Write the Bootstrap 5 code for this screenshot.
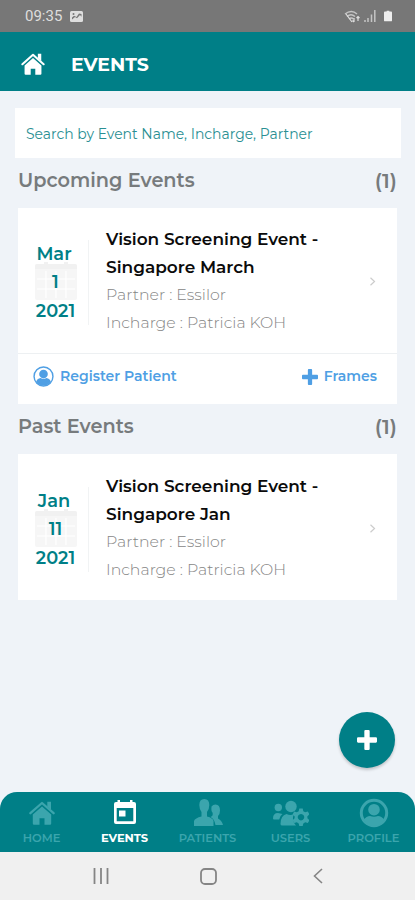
<!DOCTYPE html>
<html lang="en">
<head>
<meta charset="utf-8">
<meta name="viewport" content="width=device-width, initial-scale=1">
<title>Events</title>
<link href="https://cdn.jsdelivr.net/npm/bootstrap@5.3.0/dist/css/bootstrap.min.css" rel="stylesheet">
<style>
:root{--teal:#007f87;--dim:#3ba5ad;--blue:#4f9fe4}
body{font-family:Montserrat,Inter,sans-serif;background:#eff3f8;height:900px;overflow:hidden}
svg{display:block;flex:none}
.status-bar{height:32px;background:#777;color:#dedede;font:15px/32px Roboto,sans-serif;padding:0 23px 0 25px}
.app-header{height:59px;background:var(--teal);color:#fff;padding:4px 21px 0}
.app-header h1{font-size:18.9px;font-weight:700;margin:3px 0 0 26px}
.search-box{height:50px;margin:17px 14px 0 15px;border:0;border-radius:0;background:#fff;padding:1px 11px 0;font-size:13.95px;width:386px}
.search-box::placeholder{color:#2a8f93;opacity:1}
.section-title{height:50px;padding:0 18px 4px 18px;color:#777b7d}
.section-title h2{font-size:19.3px;font-weight:600;margin:0}
.section-title span{font-size:20.5px;font-weight:600}
.event-card{margin:0 18px;border:0;border-radius:0;background:#fff}
.event-main{height:145px;padding:17px 0 15px}
.past .event-main{height:146px;padding:18px 0 14px}
.date-box{width:71px;padding-left:5px;margin-top:15px;height:85px;border-right:1px solid #f1f3f4;color:var(--teal);font-size:17.8px;font-weight:600;line-height:28.3px;text-align:center}
.date-box div{position:relative;left:0}
.date-box div:nth-of-type(1){padding-right:3px}
.date-box .cal{position:absolute;left:17px;top:22px}
.event-info{margin-left:17px;line-height:28.1px;font-size:15.75px;color:#858585;font-weight:300}
.event-info h3{font-size:16.95px;line-height:28.1px;font-weight:600;color:#0b0b0b;margin:0}
.chevron{margin:0 21px 1px auto}
.event-foot{height:51px;border-top:1px solid #edf0f2;padding:0 20px 5px 15px;color:var(--blue);font-size:14px;font-weight:600}
.reg{margin-left:6px}
.fab{position:absolute;left:339px;top:712px;width:56px;height:56px;border-radius:50%;background:var(--teal);border:0;box-shadow:0 2px 3px #0003;padding:0}
.tab-bar{height:60px;background:var(--teal);border-radius:17px 17px 0 0;color:var(--dim);font-size:11.5px;font-weight:600}
.tab-bar a{color:inherit;text-decoration:none;width:83px;padding-top:6px;line-height:17px}
.tab-bar svg{height:30px;margin-bottom:2px}
.tab-bar .current{color:#fff;font-weight:700;letter-spacing:-.1px}
.sys-nav{height:48px;background:#f0f0f0;color:#858585}
</style>
<script src="https://cdn.jsdelivr.net/npm/bootstrap@5.3.0/dist/js/bootstrap.bundle.min.js"></script>
</head>
<body class="d-flex flex-column position-relative">
<svg width="0" height="0" class="position-absolute">
<symbol id="house" viewBox="0 0 26 24"><path fill="currentColor" d="M13 5.500 22.200 13.500v9q0 1.200-1.200 1.200H15.500v-6.500h-5v6.500H5q-1.200 0-1.200-1.200v-9Z"/><path fill="none" stroke="currentColor" stroke-width="2.300" stroke-linecap="round" stroke-linejoin="round" d="M1.400 12.200 13 2l11.600 10.200"/><path fill="currentColor" d="M18.300.800H22v8l-3.700-3Z"/></symbol>
<symbol id="calendar" viewBox="0 0 42 38"><path fill="#f6f6f6" d="M0 4q0-2 2-2h38q2 0 2 2v32q0 2-2 2H2q-2 0-2-2Z"/><path fill="#f1f1f1" d="M0 7V4q0-2 2-2h7V0h4v2h16V0h4v2h7q2 0 2 2v3Z"/><path stroke="#fff" stroke-width="1.200" d="M2 17h38M2 27h38M11 9v27M21 9v27M31 9v27"/></symbol>
<symbol id="person" viewBox="0 0 30 30"><circle cx="15" cy="15" r="13.500" fill="none" stroke="currentColor" stroke-width="2"/><circle cx="15" cy="11.500" r="6.200" fill="currentColor"/><path fill="currentColor" d="M4.500 22.500q1-4.500 6.500-5.500 4 3 8 0 5.500 1 6.500 5.500-4 5.500-10.500 5.500t-10.500-5.500"/></symbol>
<symbol id="profile" viewBox="0 0 30 30"><circle cx="15" cy="15" r="12.700" fill="none" stroke="currentColor" stroke-width="3"/><circle cx="15" cy="11.700" r="5.800" fill="currentColor"/><path fill="currentColor" d="M4.500 22q3-4 6.500-4 4 1.600 8 0 3.500 0 6.500 4-4 6-10.500 6T4.500 22"/></symbol>
<symbol id="plus" viewBox="0 0 18 18"><path fill="currentColor" d="M6.600 1q0-1 1-1h2.800q1 0 1 1v5.600H17q1 0 1 1v2.800q0 1-1 1h-5.600V17q0 1-1 1H7.600q-1 0-1-1v-5.600H1q-1 0-1-1V7.600q0-1 1-1h5.600Z"/></symbol>
<symbol id="next" viewBox="0 0 6 9"><path d="M.5.800 4.500 4.500.5 8.200" fill="none" stroke="#ccc" stroke-width="1.200"/></symbol>
</svg>
<div class="status-bar d-flex align-items-center">
<span>09:35</span>
<svg class="ms-2" width="13" height="11" viewBox="0 0 13 11"><rect width="13" height="11" rx="1.500" fill="#dedede"/><path d="M2 8.500 5 6l2 1.300L10 4l1.500 1.700V3L9 2.500 6.500 6 4 4.800 2 6.500Z" fill="#777"/><circle cx="3.500" cy="3" r="1" fill="#777"/></svg>
<svg class="ms-auto" width="16" height="13" viewBox="0 0 16 13"><path d="M1 4q6.500-5 12 0M3 6.500q4-3.500 8 0M5 9q2.300-2 4.500 0" fill="none" stroke="#c5c5c5" stroke-width="1.500"/><path d="m8 12-6-8m8 4v4m-1.500-1.500L10 12m4-5v4m-1.500-3L14 6.500 15.500 8" fill="none" stroke="#ddd" stroke-width="1.200"/></svg>
<svg class="ms-1" width="12" height="12" viewBox="0 0 12 12"><path d="M1 10v2M4 8v4M7.500 4.500V12M10.800 0v12" stroke="#c5c5c5" stroke-width="1.500"/></svg>
<svg class="ms-2" width="8" height="12" viewBox="0 0 9 12"><path d="M3 0h3v1h2q1 0 1 1v9q0 1-1 1H1q-1 0-1-1V2q0-1 1-1h2Z" fill="#eee"/></svg>
</div>
<header class="app-header d-flex align-items-center"><svg width="24" height="22"><use href="#house"/></svg><h1>EVENTS</h1></header>
<main class="flex-grow-1">
<input class="search-box form-control" type="text" placeholder="Search by Event Name, Incharge, Partner" aria-label="Search">
<div class="section-title d-flex align-items-center justify-content-between"><h2>Upcoming Events</h2><span>(1)</span></div>
<section class="event-card card">
<div class="event-main d-flex">
<div class="date-box position-relative"><svg class="cal" width="42" height="38"><use href="#calendar"/></svg><div>Mar</div><div>1</div><div>2021</div></div>
<div class="event-info"><h3>Vision Screening Event -<br>Singapore March</h3><div>Partner : Essilor</div><div>Incharge : Patricia KOH</div></div>
<svg class="chevron align-self-center" width="6" height="9"><use href="#next"/></svg>
</div>
<div class="event-foot d-flex align-items-center"><svg width="21" height="21"><use href="#person"/></svg><span class="reg">Register Patient</span><svg class="ms-auto" width="16" height="16"><use href="#plus"/></svg><span class="reg">Frames</span></div>
</section>
<div class="section-title d-flex align-items-center justify-content-between"><h2>Past Events</h2><span>(1)</span></div>
<section class="event-card past card">
<div class="event-main d-flex">
<div class="date-box position-relative"><svg class="cal" width="42" height="38"><use href="#calendar"/></svg><div>Jan</div><div>11</div><div>2021</div></div>
<div class="event-info"><h3>Vision Screening Event -<br>Singapore Jan</h3><div>Partner : Essilor</div><div>Incharge : Patricia KOH</div></div>
<svg class="chevron align-self-center" width="6" height="9"><use href="#next"/></svg>
</div>
</section>
</main>
<button class="fab d-flex align-items-center justify-content-center text-white" aria-label="Add"><svg width="20" height="20"><use href="#plus"/></svg></button>
<nav class="tab-bar d-flex justify-content-between flex-shrink-0">
<a href="#" class="d-flex flex-column align-items-center"><svg width="26" viewBox="0 -3 26 30"><use href="#house" width="26" height="24"/></svg>HOME</a>
<a href="#" class="current d-flex flex-column align-items-center"><svg width="22" viewBox="0 0 22 30"><path fill="currentColor" fill-rule="evenodd" d="M3.500 2H6v2h10V2h2.500v2H20q2 0 2 2v18q0 2-2 2H2q-2 0-2-2V6q0-2 2-2h1.500ZM2.700 10v13.300h16.600V10Z"/><path fill="currentColor" d="M5 12.500h6.500v6H5z"/></svg>EVENTS</a>
<a href="#" class="d-flex flex-column align-items-center"><svg width="30" viewBox="0 0 30 30"><path fill="currentColor" d="M6.300 7q0-6 5-6t5 6q0 4-2.300 7v4.500q6 1.500 6.500 4.500v5H1v-5q1-3 7.500-4.500V14Q6.300 11 6.300 7"/><path fill="currentColor" d="M18.500 8.500Q20 6.500 22.500 6.500q4.500 0 4.500 6 0 3.500-2 5.500v2.500q4 2 5 6.500h-7.500q-1-6-5-8 3-1 2-4.500-1.500-1-1-6"/></svg>PATIENTS</a>
<a href="#" class="d-flex flex-column align-items-center"><svg width="36" viewBox="0 0 36 30"><g fill="currentColor"><circle cx="18" cy="8.500" r="5.700"/><circle cx="5.300" cy="9.500" r="3.700"/><path d="M0 20.500q0-5.500 5-5.500l4.500 1q-3 2-3.300 5.500H1q-1 0-1-1M7.500 26q0-8.500 6-10 4 2 7.500 0-3 6 2 11.500H9.300q-1.800 0-1.800-1.500"/><path fill-rule="evenodd" d="m26.300 10.500h3.400l.6 2.700 1.900 1.100 2.600-.9 1.700 3-2.100 1.800v2.100l2.100 1.900-1.700 2.900-2.600-.8-1.900 1.100-.6 2.600h-3.400l-.6-2.600-1.900-1.100-2.600.8-1.700-2.900 2.100-1.900v-2.100l-2.100-1.800 1.700-3 2.600.9 1.900-1.100ZM28 16a3.200 3.200 0 1 0 .01 0Z"/></g></svg>USERS</a>
<a href="#" class="d-flex flex-column align-items-center"><svg width="30"><use href="#profile"/></svg>PROFILE</a>
</nav>
<div class="sys-nav d-flex align-items-center justify-content-center flex-shrink-0">
<svg width="16" height="16" viewBox="0 0 16 16" stroke="currentColor" stroke-width="1.800"><path d="M1.500 0v16M8 0v16M14.500 0v16"/></svg>
<svg style="margin:0 96px 0 91px" width="17" height="17" viewBox="0 0 17 17"><rect x="1" y="1" width="15" height="15" rx="4" fill="none" stroke="currentColor" stroke-width="1.800"/></svg>
<svg width="10" height="16" viewBox="0 0 10 16"><path d="M9 1 1.500 8 9 15" fill="none" stroke="currentColor" stroke-width="1.600"/></svg>
</div>
</body>
</html>
